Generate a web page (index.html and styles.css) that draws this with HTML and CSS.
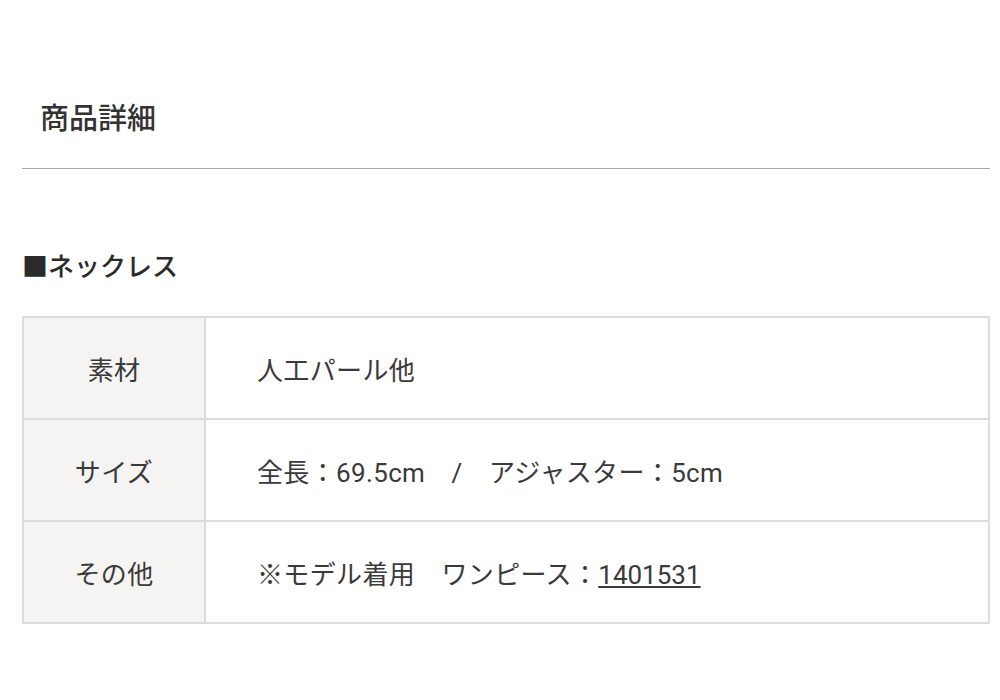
FILE: index.html
```html
<!DOCTYPE html>
<html lang="ja">
<head>
<meta charset="utf-8">
<link rel="stylesheet" href="styles.css">
</head>
<body>
<div class="page">
  <h2 class="title">商品詳細</h2>
  <hr class="rule">
  <h3 class="subtitle">■ネックレス</h3>
  <table class="spec">
    <tr>
      <th>素材</th>
      <td>人工パール他</td>
    </tr>
    <tr>
      <th>サイズ</th>
      <td>全長：69.5cm　/　アジャスター：5cm</td>
    </tr>
    <tr>
      <th>その他</th>
      <td>※モデル着用　ワンピース：<a class="link" href="#">1401531</a></td>
    </tr>
  </table>
</div>
</body>
</html>
```
FILE: styles.css
```css
html, body {
  margin: 0;
  padding: 0;
  background: #fff;
}
body {
  font-family: Roboto, "Noto Sans CJK JP", sans-serif;
  color: #333;
}
.page {
  padding: 0 10px 0 22px;
}
.title {
  margin: 0;
  padding: 99px 0 0 18px;
  font-size: 29px;
  line-height: 40px;
  font-weight: 500;
  color: #333;
}
.rule {
  margin: 29px 0 0 0;
  border: 0;
  border-top: 1px solid #aaa;
  height: 0;
}
.subtitle {
  margin: 81px 0 0 0;
  font-size: 26px;
  line-height: 34px;
  font-weight: 500;
  color: #2a2a2a;
}
.spec {
  margin-top: 32px;
  width: 100%;
  border-collapse: collapse;
  border: 2px solid #dcdcdc;
}
.spec th, .spec td {
  border: 2px solid #dcdcdc;
  height: 100px;
  padding: 0;
  font-size: 26px;
  font-weight: 400;
  letter-spacing: 0.35px;
  color: #3a3a3a;
}
.spec th {
  width: 180px;
  background: #f5f4f2;
  text-align: center;
}
.spec td {
  padding-left: 51px;
  text-align: left;
}
.link {
  color: #3a3a3a;
  text-decoration: underline;
  letter-spacing: 0;
}
```
